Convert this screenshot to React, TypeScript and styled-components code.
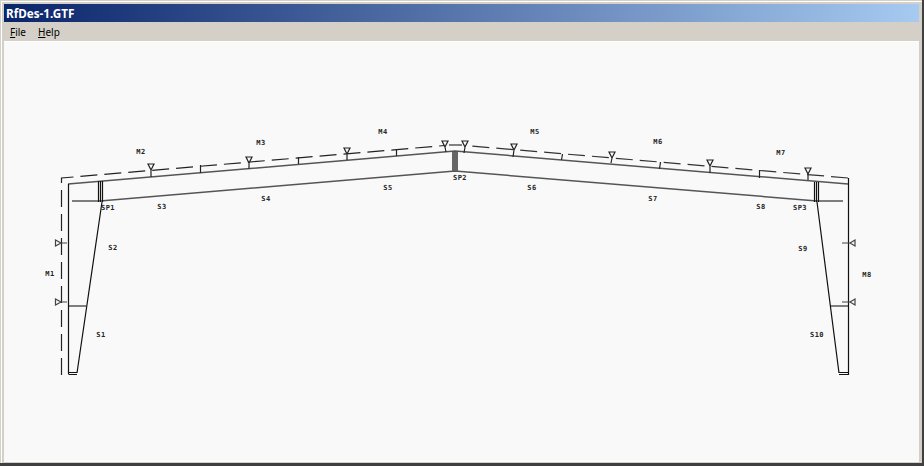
import React from 'react';
import styled, { createGlobalStyle } from 'styled-components';

const Global = createGlobalStyle`
  html, body { margin: 0; padding: 0; background: #d4d0c8; }
`;
const Frame = styled.div`
  width: 924px; height: 466px; box-sizing: border-box; overflow: hidden;
  display: flex; flex-direction: column; background: #d4d0c8;
  padding: 4px 3px 1px 4px;
  border-right: 2px solid #404040;
  border-bottom: 3px solid #404040;
  box-shadow: inset 1px 1px 0 #d4d0c8, inset 2px 2px 0 #fff;
`;
const TitleBar = styled.div`
  height: 18px; flex: none; display: flex; align-items: center; padding-left: 2px;
  background: linear-gradient(90deg, #0a246a, #a6caf0);
  color: #fff; font: bold 11.7px "Noto Sans", sans-serif;
`;
const MenuBar = styled.div`
  height: 19px; flex: none; display: flex; align-items: center; gap: 12px; padding-left: 6px;
  font: 10px "Noto Sans", sans-serif; color: #000;
`;
const Canvas = styled.div`
  flex: 1; min-height: 0; overflow: hidden; background: #f9f9f9;
  border-top: 1px solid #fff; border-bottom: 1px solid #fff;
`;
const Drawing = styled.svg`
  display: block; width: 915px; height: 420px;
`;
const Labels = styled.g`
  opacity: 0.99;
`;
const Label = styled.text`
  font: bold 7px "DejaVu Sans Mono", monospace; letter-spacing: 0.5px; fill: #222; text-anchor: middle;
`;

const labels: [string, number, number][] = [
  ['M1', 50, 276], ['M2', 141, 154], ['M3', 261, 145], ['M4', 383, 134], ['M5', 535, 134],
  ['M6', 658, 144], ['M7', 781, 155], ['M8', 867, 277],
  ['S1', 101, 337], ['S2', 113, 250], ['S3', 162, 209], ['S4', 266, 201], ['S5', 388, 190],
  ['S6', 532, 190], ['S7', 653, 201], ['S8', 761, 209], ['S9', 803, 251], ['S10', 817, 337],
  ['SP1', 108, 210], ['SP2', 460, 180], ['SP3', 800, 210],
];
const tops: [number, number, number, number][] = [
  [151, 164, 177, 0], [249, 157, 169, 0], [347, 148, 160, 0], [445, 141, 152, 1], [465, 141, 153, -1],
  [514, 144, 157, -1], [612, 152, 163, -1], [710, 160, 173, 0], [808, 168, 180, 0],
];
const ticks: [number, number, number, number][] = [
  [200, 165, 173, 0], [298, 157, 164, 0], [396, 149, 156, 0], [562, 154, 160, -1], [660, 162, 169, -1], [759, 170, 178, 0],
];

export default function App() {
  return (
    <>
      <Global />
      <Frame>
        <TitleBar>RfDes-1.GTF</TitleBar>
        <MenuBar>
          <span><u>F</u>ile</span>
          <span><u>H</u>elp</span>
        </MenuBar>
        <Canvas>
          <Drawing viewBox="4 42 915 420" fill="none">
            <g stroke="#555" strokeWidth="1.5">
              <path d="M68 184L455 151L848 184" />
              <path d="M72 201H100L455 171L817 201H843" />
              <path d="M68 306H86M830 306H848" />
            </g>
            <g stroke="#111" strokeWidth="1.2">
              <path d="M68.5 184V374M848.5 178V375" />
              <path d="M102 202L77 373M817 202L839 373" />
              <path d="M68.5 372.5H77M68.5 374.5H77M839 372.5H848M839 374.5H848" />
              <path d="M98.5 181V202M100.5 181V202M102.5 181V202M814.5 182V202M816.5 182V202M818.5 182V202" />
            </g>
            <path d="M61.5 375V178L445 145.5" stroke="#222" strokeWidth="1.2" strokeDasharray="17 7" />
            <path d="M848 178L465 145.5" stroke="#333" strokeWidth="1.2" strokeDasharray="17 7" />
            <path d="M449 145H462" stroke="#333" strokeWidth="1.2" />
            <rect x="452" y="152" width="6" height="19" fill="#666" />
            {tops.map(([x, y, e, d]) => (
              <path key={x} d={`M${x} ${y + 6}L${x - 3} ${y}H${x + 3}ZM${x} ${y + 6}L${x + d} ${e}`} stroke="#222" strokeWidth="1.2" fill="#f9f9f9" />
            ))}
            {ticks.map(([x, y, e, d]) => (
              <path key={x} d={`M${x + 0.5} ${y}L${x + 0.5 + d} ${e}`} stroke="#222" strokeWidth="1.2" />
            ))}
            <g stroke="#444" strokeWidth="1.2" fill="#f9f9f9">
              <path d="M61 243H67M55.5 240V246L61 243Z" />
              <path d="M61 302H67M55.5 299V305L61 302Z" />
              <path d="M842 243H850M855 240V246L850 243Z" />
              <path d="M842 302H850M855 299V305L850 302Z" />
            </g>
            <Labels>
              {labels.map(([t, x, y]) => (
                <Label key={t} x={x} y={y}>{t}</Label>
              ))}
            </Labels>
          </Drawing>
        </Canvas>
      </Frame>
    </>
  );
}
